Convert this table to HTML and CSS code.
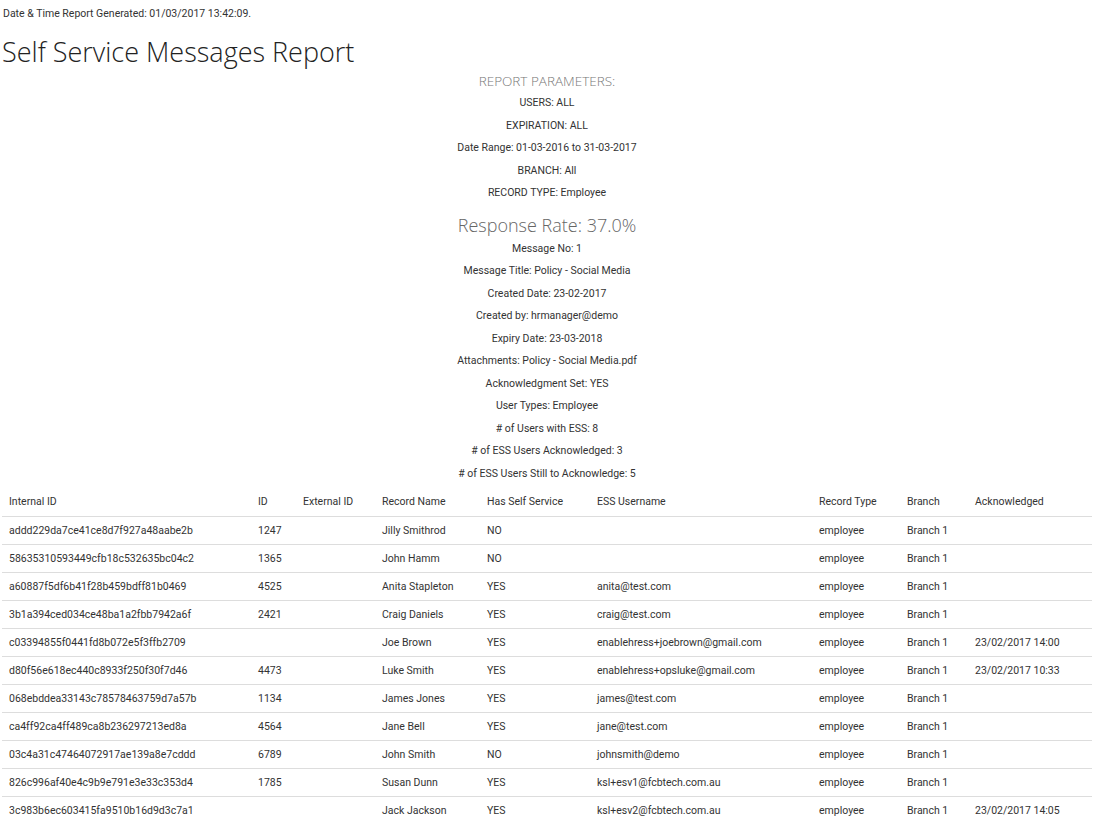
FILE: index.html
```html
<!DOCTYPE html>
<html>
<head>
<meta charset="utf-8">
<link rel="stylesheet" href="styles.css">
</head>
<body>
<div class="page">
  <div class="generated">Date &amp; Time Report Generated: 01/03/2017 13:42:09.</div>
  <h1 class="title">Self Service Messages Report</h1>
  <div class="params">
    <h4 class="params-head">REPORT PARAMETERS:</h4>
    <p>USERS: ALL</p>
    <p>EXPIRATION: ALL</p>
    <p>Date Range: 01-03-2016 to 31-03-2017</p>
    <p>BRANCH: All</p>
    <p>RECORD TYPE: Employee</p>
    <h3 class="rate">Response Rate: 37.0%</h3>
    <p>Message No: 1</p>
    <p>Message Title: Policy - Social Media</p>
    <p>Created Date: 23-02-2017</p>
    <p>Created by: hrmanager@demo</p>
    <p>Expiry Date: 23-03-2018</p>
    <p>Attachments: Policy - Social Media.pdf</p>
    <p>Acknowledgment Set: YES</p>
    <p>User Types: Employee</p>
    <p># of Users with ESS: 8</p>
    <p># of ESS Users Acknowledged: 3</p>
    <p># of ESS Users Still to Acknowledge: 5</p>
  </div>
  <table class="report">
    <colgroup>
      <col class="c-internal"><col class="c-id"><col class="c-ext"><col class="c-name"><col class="c-ss"><col class="c-user"><col class="c-type"><col class="c-branch"><col class="c-ack">
    </colgroup>
    <thead>
      <tr><th>Internal ID</th><th>ID</th><th>External ID</th><th>Record Name</th><th>Has Self Service</th><th>ESS Username</th><th>Record Type</th><th>Branch</th><th>Acknowledged</th></tr>
    </thead>
    <tbody>
      <tr><td>addd229da7ce41ce8d7f927a48aabe2b</td><td>1247</td><td></td><td>Jilly Smithrod</td><td>NO</td><td></td><td>employee</td><td>Branch 1</td><td></td></tr>
      <tr><td>58635310593449cfb18c532635bc04c2</td><td>1365</td><td></td><td>John Hamm</td><td>NO</td><td></td><td>employee</td><td>Branch 1</td><td></td></tr>
      <tr><td>a60887f5df6b41f28b459bdff81b0469</td><td>4525</td><td></td><td>Anita Stapleton</td><td>YES</td><td>anita@test.com</td><td>employee</td><td>Branch 1</td><td></td></tr>
      <tr><td>3b1a394ced034ce48ba1a2fbb7942a6f</td><td>2421</td><td></td><td>Craig Daniels</td><td>YES</td><td>craig@test.com</td><td>employee</td><td>Branch 1</td><td></td></tr>
      <tr><td>c03394855f0441fd8b072e5f3ffb2709</td><td></td><td></td><td>Joe Brown</td><td>YES</td><td>enablehress+joebrown@gmail.com</td><td>employee</td><td>Branch 1</td><td>23/02/2017 14:00</td></tr>
      <tr><td>d80f56e618ec440c8933f250f30f7d46</td><td>4473</td><td></td><td>Luke Smith</td><td>YES</td><td>enablehress+opsluke@gmail.com</td><td>employee</td><td>Branch 1</td><td>23/02/2017 10:33</td></tr>
      <tr><td>068ebddea33143c78578463759d7a57b</td><td>1134</td><td></td><td>James Jones</td><td>YES</td><td>james@test.com</td><td>employee</td><td>Branch 1</td><td></td></tr>
      <tr><td>ca4ff92ca4ff489ca8b236297213ed8a</td><td>4564</td><td></td><td>Jane Bell</td><td>YES</td><td>jane@test.com</td><td>employee</td><td>Branch 1</td><td></td></tr>
      <tr><td>03c4a31c47464072917ae139a8e7cddd</td><td>6789</td><td></td><td>John Smith</td><td>NO</td><td>johnsmith@demo</td><td>employee</td><td>Branch 1</td><td></td></tr>
      <tr><td>826c996af40e4c9b9e791e3e33c353d4</td><td>1785</td><td></td><td>Susan Dunn</td><td>YES</td><td>ksl+esv1@fcbtech.com.au</td><td>employee</td><td>Branch 1</td><td></td></tr>
      <tr><td>3c983b6ec603415fa9510b16d9d3c7a1</td><td></td><td></td><td>Jack Jackson</td><td>YES</td><td>ksl+esv2@fcbtech.com.au</td><td>employee</td><td>Branch 1</td><td>23/02/2017 14:05</td></tr>
    </tbody>
  </table>
</div>
</body>
</html>
```
FILE: styles.css
```css
html, body {
  margin: 0;
  padding: 0;
  background: #fff;
}
body {
  font-family: Roboto, "Liberation Sans", sans-serif;
  font-size: 10.5px;
  color: #333;
}
.page {
  padding: 6px 4px 0 2px;
}
.generated {
  padding-left: 1px;
  line-height: 16px;
}
.title {
  font-family: "Open Sans", sans-serif;
  font-weight: 300;
  font-size: 27px;
  color: #222;
  margin: 16px 0 0 0;
  line-height: 28px;
}
.params {
  text-align: center;
}
.params-head {
  font-family: "Open Sans", sans-serif;
  font-weight: 300;
  font-size: 13.5px;
  color: #777;
  margin: 5px 0 0 0;
  line-height: 21px;
}
.params p {
  margin: 0;
  line-height: 22.5px;
}
.rate {
  font-family: "Open Sans", sans-serif;
  font-weight: 300;
  font-size: 18px;
  color: #666;
  margin: 7px 0 0 0;
  line-height: 26px;
}
.report {
  width: 100%;
  border-collapse: collapse;
  table-layout: fixed;
  margin-top: 3px;
}
.report th, .report td {
  text-align: left;
  font-weight: 400;
  padding: 0 0 0 7px;
  height: 27px;
  line-height: 14px;
  vertical-align: middle;
  white-space: nowrap;
  overflow: hidden;
}
.report th {
  height: 28px;
}
.report tbody td {
  border-top: 1px solid #ddd;
}
.c-internal { width: 249px; }
.c-id { width: 45px; }
.c-ext { width: 79px; }
.c-name { width: 105px; }
.c-ss { width: 110px; }
.c-user { width: 222px; }
.c-type { width: 88px; }
.c-branch { width: 68px; }
```
